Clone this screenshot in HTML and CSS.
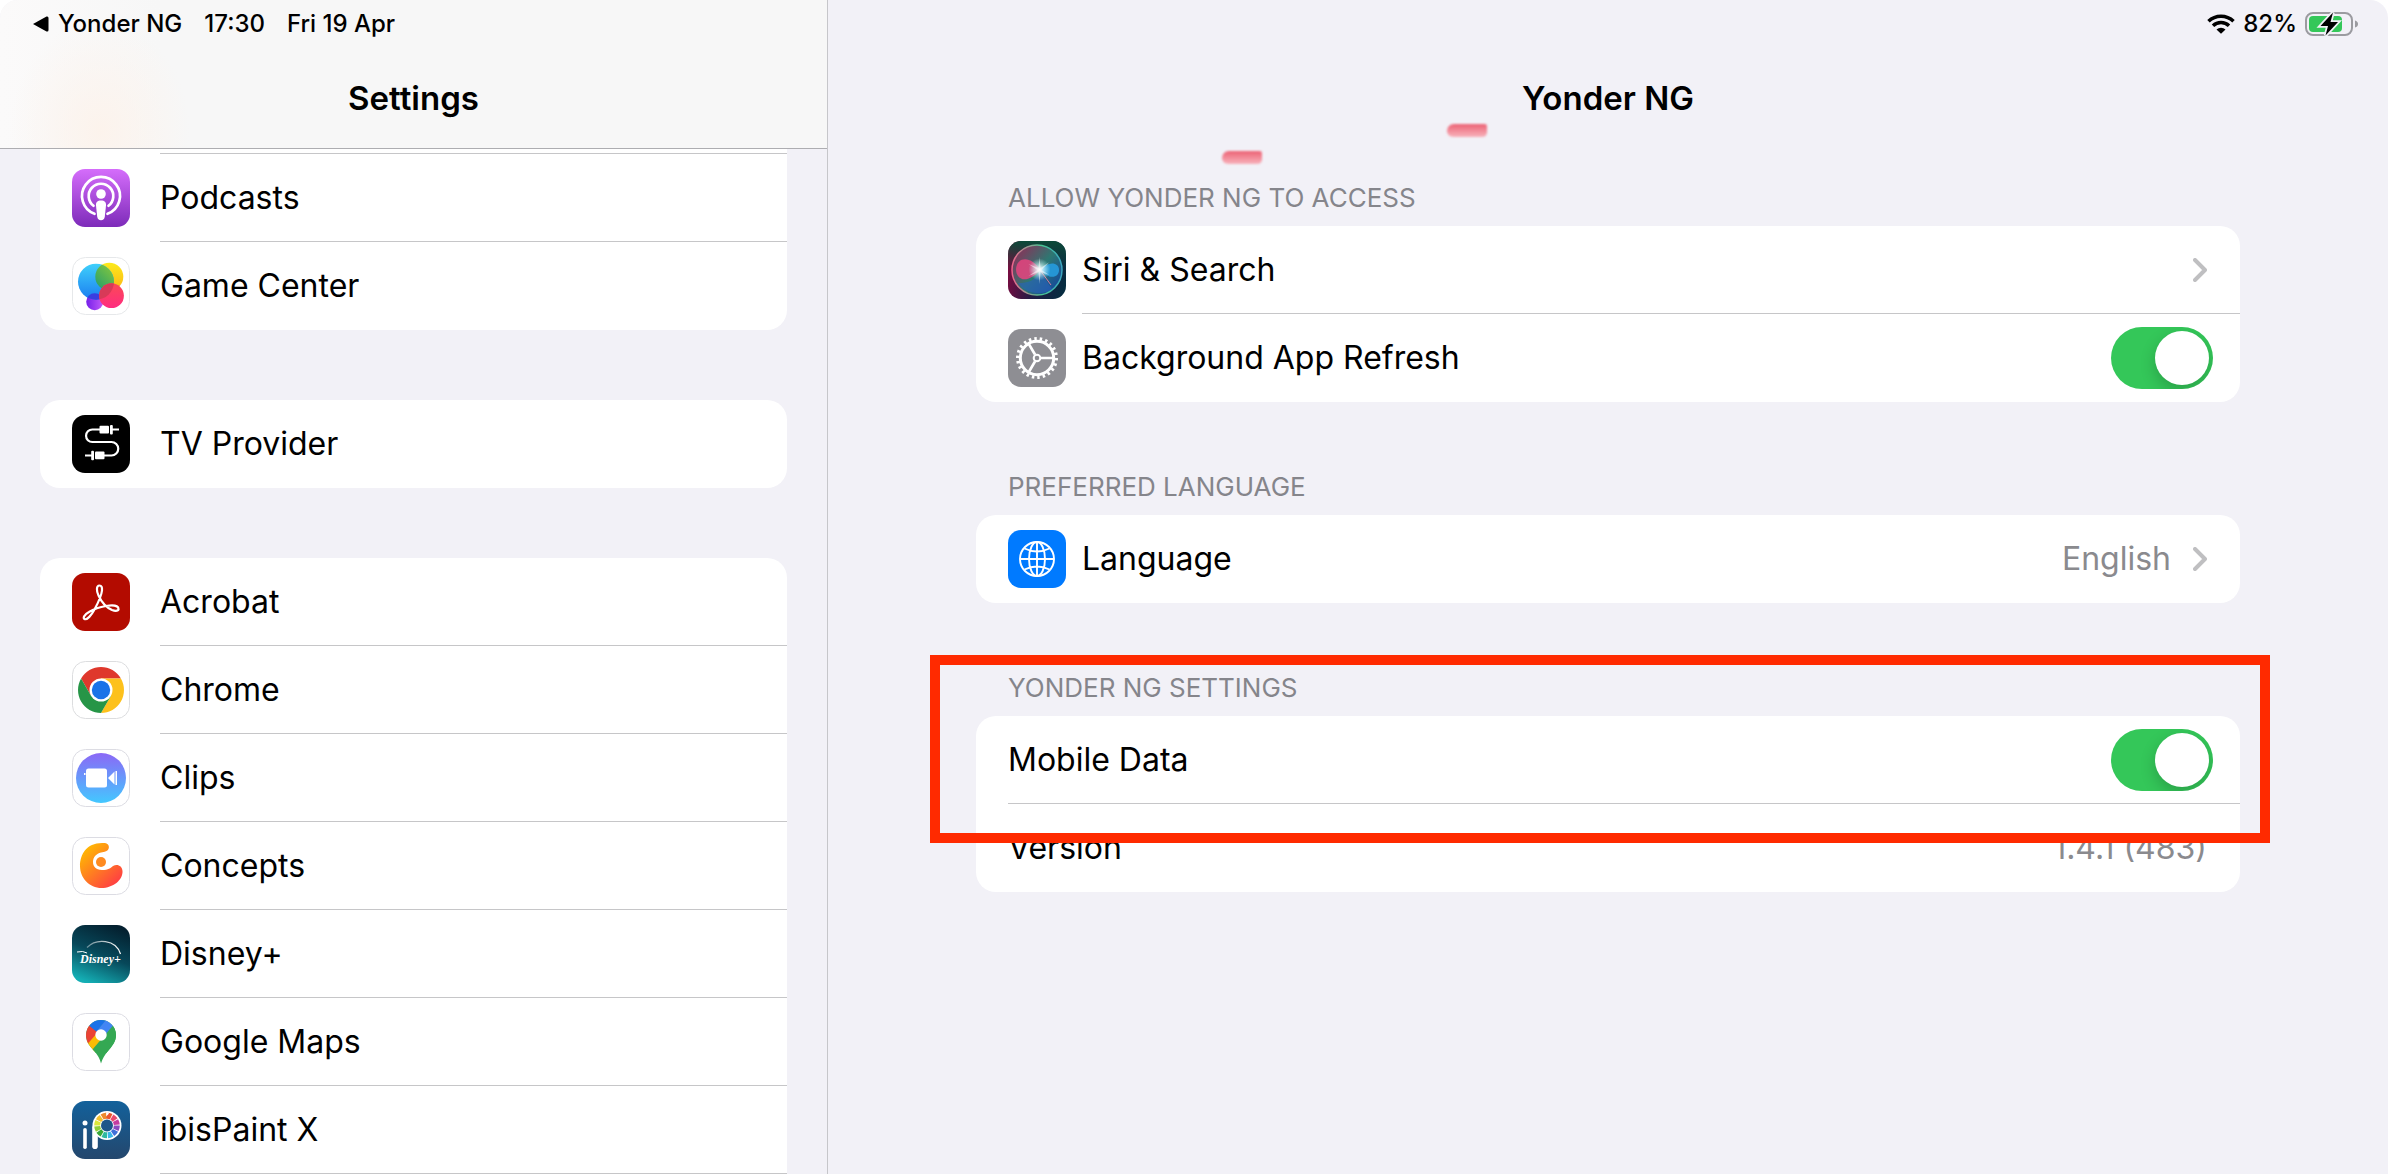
FILE: index.html
```html
<!DOCTYPE html>
<html lang="en">
<head>
  <meta charset="UTF-8" />
  <meta name="viewport" content="width=device-width, initial-scale=1" />
  <title>Settings</title>
  <link rel="stylesheet" href="styles.css">
</head>
<body>
  <div class="screen">
    <aside class="sidebar">
      <header class="bar sidebar-bar">
        <div class="status">
          <a class="back" href="#">
            <svg width="16" height="16" viewBox="0 0 16 16"><path d="M0 8 L13.500 .6 Q15.500 0 15.500 2 V14 Q15.500 16 13.500 15.400 Z"/></svg>
            Yonder NG
          </a>
          <span>17:30</span>
          <span>Fri 19 Apr</span>
        </div>
        <h1 class="title">Settings</h1>
      </header>

      <nav class="sidebar-list">
        <ul class="card card-cut-top">
          <li class="row row-cut"><span class="icon"></span><span class="body"></span></li>
          <li><a class="row" href="#">
            <svg class="icon" viewBox="0 0 58 58">
              <defs><linearGradient id="pod" x1="0" y1="0" x2="0" y2="1"><stop offset="0" stop-color="#d56dfb"/><stop offset="1" stop-color="#7d2bb9"/></linearGradient></defs>
              <rect width="58" height="58" rx="13" fill="url(#pod)"/>
              <g fill="none" stroke="#fff" stroke-width="2.700" stroke-linecap="round">
                <path d="M22.500 44.800A19 19 0 1 1 35.500 44.800"/>
                <path d="M21.500 36.800A12.300 12.300 0 1 1 36.500 36.800"/>
              </g>
              <circle cx="29" cy="25" r="4.800" fill="#fff"/>
              <path d="M29 31.500c3.500 0 5.300 1.500 5 5l-1.200 11c-.3 2.500-1.600 3.700-3.800 3.700s-3.500-1.200-3.800-3.700l-1.200-11c-.3-3.500 1.500-5 5-5z" fill="#fff"/>
            </svg>
            <span class="body">Podcasts</span>
          </a></li>
          <li><a class="row" href="#">
            <svg class="icon" viewBox="0 0 58 58">
              <defs>
                <linearGradient id="gcb" x1="0" y1="0" x2="0" y2="1"><stop offset="0" stop-color="#3fd0fb"/><stop offset="1" stop-color="#1b7df0"/></linearGradient>
                <linearGradient id="gcg" x1="1" y1="0" x2="0" y2="1"><stop offset="0" stop-color="#a6d62c"/><stop offset="1" stop-color="#1f9b6e"/></linearGradient>
                <linearGradient id="gcy" x1="0" y1="0" x2="0" y2="1"><stop offset="0" stop-color="#fbea1c"/><stop offset="1" stop-color="#fdb515"/></linearGradient>
                <linearGradient id="gcr" x1="0" y1="0" x2="0" y2="1"><stop offset="0" stop-color="#fb4a55"/><stop offset="1" stop-color="#ff2c80"/></linearGradient>
                <linearGradient id="gcp" x1="0" y1="0" x2="1" y2="0"><stop offset="0" stop-color="#7620ea"/><stop offset="1" stop-color="#c05af8"/></linearGradient>
                <clipPath id="gcclip"><circle cx="24" cy="24.700" r="18"/></clipPath>
              </defs>
              <rect x=".5" y=".5" width="57" height="57" rx="13" fill="#fff" stroke="#e6e8ea"/>
              <circle cx="22.700" cy="44.700" r="8.500" fill="url(#gcp)"/>
              <circle cx="37.300" cy="19.700" r="14" fill="url(#gcy)"/>
              <circle cx="24" cy="24.700" r="18" fill="url(#gcb)"/>
              <g clip-path="url(#gcclip)">
                <circle cx="37.300" cy="19.700" r="14" fill="url(#gcg)"/>
                <circle cx="22.700" cy="44.700" r="8.500" fill="#3a3de0"/>
              </g>
              <circle cx="39.500" cy="38.700" r="12.400" fill="url(#gcr)"/>
              <g clip-path="url(#gcclip)"><circle cx="39.500" cy="38.700" r="12.400" fill="#d83a58"/></g>
            </svg>
            <span class="body">Game Center</span>
          </a></li>
        </ul>

        <ul class="card">
          <li><a class="row" href="#">
            <svg class="icon" viewBox="0 0 58 58">
              <rect width="58" height="58" rx="13"/>
              <g fill="none" stroke="#fff" stroke-width="2.200">
                <path d="M28 14.500H20.300a6.200 6.200 0 0 0 0 12.500H39.500a6.700 6.700 0 0 1 0 13.500H32"/>
                <path d="M40 14.500h7M13 40.500h7"/>
              </g>
              <g fill="#fff">
                <rect x="27.500" y="10.700" width="9.500" height="7.800" rx="1"/><rect x="38" y="10" width="2.800" height="9.400" rx="1"/>
                <rect x="23" y="36.500" width="9.500" height="7.800" rx="1"/><rect x="19.200" y="35.800" width="2.800" height="9.400" rx="1"/>
              </g>
            </svg>
            <span class="body">TV Provider</span>
          </a></li>
        </ul>

        <ul class="card card-cut-bottom">
          <li><a class="row" href="#">
            <svg class="icon" viewBox="0 0 58 58">
              <rect width="58" height="58" rx="13" fill="#b30b00"/>
              <path d="M27.500 12.500C24 12.500 24.500 18.500 26.500 22.500C29 28 33.500 34 40 37C44 38.500 47 37.800 46.500 35.500C46 32.500 40 32 34 33C28 34 22 36 17 39C12.500 41.500 10.500 45 12.500 46C15 47.500 19.500 42 22.500 36.500C26 30 29.500 22 30 17.500C30.200 14 29.500 12.500 27.500 12.500Z" fill="none" stroke="#fff" stroke-width="2.200"/>
            </svg>
            <span class="body">Acrobat</span>
          </a></li>
          <li><a class="row" href="#">
            <svg class="icon" viewBox="0 0 58 58">
              <rect x=".5" y=".5" width="57" height="57" rx="13" fill="#fff" stroke="#dcdddf"/>
              <path d="M9.100 17.500A23 23 0 0 1 48.900 17.500L29 17.500L19 34.750Z" fill="#df382c"/>
              <path d="M48.900 17.500A23 23 0 0 1 29 52L39 34.750L29 17.500Z" fill="#fdc11c"/>
              <path d="M29 52A23 23 0 0 1 9.100 17.500L19 34.750L39 34.750Z" fill="#269547"/>
              <circle cx="29" cy="29" r="11.500" fill="#fff"/>
              <circle cx="29" cy="29" r="9.200" fill="#1a73e8"/>
            </svg>
            <span class="body">Chrome</span>
          </a></li>
          <li><a class="row" href="#">
            <svg class="icon" viewBox="0 0 58 58">
              <defs><linearGradient id="clips" x1="0" y1="0" x2="0" y2="1"><stop offset="0" stop-color="#8b68f6"/><stop offset="1" stop-color="#43c8ff"/></linearGradient></defs>
              <rect x=".5" y=".5" width="57" height="57" rx="13" fill="#fff" stroke="#dcdce3"/>
              <circle cx="29" cy="29" r="25" fill="url(#clips)"/>
              <rect x="14" y="19.500" width="21" height="19" rx="2.500" fill="#fff"/>
              <path d="M36 29L42.500 22.500V35.500ZM43.500 22h1.500v14h-1.500zM12 24h1.500v2h-1.500z" fill="#fff"/>
            </svg>
            <span class="body">Clips</span>
          </a></li>
          <li><a class="row" href="#">
            <svg class="icon" viewBox="0 0 58 58">
              <defs><linearGradient id="conc" x1=".1" y1=".1" x2=".8" y2=".9"><stop offset="0" stop-color="#ffbb00"/><stop offset="1" stop-color="#ff4440"/></linearGradient></defs>
              <rect x=".5" y=".5" width="57" height="57" rx="13" fill="#fff" stroke="#dcdce3"/>
              <path d="M33 6C15 4.500 8 17 8 29C8 41 17.500 51 29.500 51C41 51 51 43 50.500 34C50.300 28.500 45 26.500 41 29C38.500 31 36.500 33 30 33C23.500 33 21 29 21 25C21 20 24.500 16.500 29 15.500C31 15 32 15 34 14.300C38.500 12.500 37.500 6.500 33 6Z" fill="url(#conc)"/>
              <circle cx="29" cy="25" r="5" fill="#ff8a1f"/>
            </svg>
            <span class="body">Concepts</span>
          </a></li>
          <li><a class="row" href="#">
            <svg class="icon" viewBox="0 0 58 58">
              <defs>
                <linearGradient id="dis" x1=".7" y1="0" x2=".3" y2="1"><stop offset="0" stop-color="#04202f"/><stop offset=".5" stop-color="#07485a"/><stop offset="1" stop-color="#14aeb4"/></linearGradient>
                <linearGradient id="disarc"><stop offset="0" stop-color="#fff" stop-opacity=".4"/><stop offset="1" stop-color="#fff"/></linearGradient>
              </defs>
              <rect width="58" height="58" rx="13" fill="url(#dis)"/>
              <path d="M15 22.500C24 13 44 14 48.500 29" fill="none" stroke="url(#disarc)" stroke-width="1.200"/>
              <path d="M5 27q6-1.500 10 1" fill="none" stroke="#fff"/>
              <text class="disney" x="8" y="38">Disney+</text>
            </svg>
            <span class="body">Disney+</span>
          </a></li>
          <li><a class="row" href="#">
            <svg class="icon" viewBox="0 0 58 58">
              <defs><clipPath id="pin"><path d="M29 50.500C27.500 44 24 40 20 35.500C16.500 31.500 14 27.500 14 22A15 15 0 0 1 44 22C44 29 40 33 36 38C32.500 42 30.500 45.500 29 50.500Z"/></clipPath></defs>
              <rect x=".5" y=".5" width="57" height="57" rx="13" fill="#fff" stroke="#dcdce3"/>
              <g clip-path="url(#pin)">
                <rect x="10" y="5" width="40" height="48" fill="#34a853"/>
                <path d="M10 34L25 17L34 26L20 43Z" fill="#fbbc04"/>
                <path d="M10 5L17.500 12.500L26 19L13 34Z" fill="#ea4335"/>
                <path d="M10 5H36L24.500 18.700L17 12.500Z" fill="#1a73e8"/>
                <path d="M36 4.500L46 6L33 26L24.500 18.500Z" fill="#4285f4"/>
                <path d="M41.500 12L50 12V40H22L20 37Z" fill="#34a853"/>
              </g>
              <circle cx="29" cy="22" r="5.700" fill="#fff"/>
            </svg>
            <span class="body">Google Maps</span>
          </a></li>
          <li><a class="row" href="#">
            <svg class="icon" viewBox="0 0 58 58">
              <defs><linearGradient id="ibis" x1="0" y1="0" x2="0" y2="1"><stop offset="0" stop-color="#13619b"/><stop offset="1" stop-color="#24476d"/></linearGradient></defs>
              <rect width="58" height="58" rx="13" fill="url(#ibis)"/>
              <g fill="#fff">
                <circle cx="13" cy="22" r="2.500"/><rect x="11.200" y="27" width="3.600" height="21" rx="1.800"/>
                <rect x="20.200" y="24" width="5.600" height="24" rx="2.800"/><circle cx="35" cy="24.500" r="14.500"/>
              </g>
              <g class="wheel" transform="rotate(-90 35 24.500)">
                <circle cx="35" cy="24.500" r="9.800" pathLength="12" stroke="#e8552d"/>
                <circle cx="35" cy="24.500" r="9.800" pathLength="12" stroke="#ea4a6c" stroke-dashoffset="-1"/>
                <circle cx="35" cy="24.500" r="9.800" pathLength="12" stroke="#c43ba0" stroke-dashoffset="-2"/>
                <circle cx="35" cy="24.500" r="9.800" pathLength="12" stroke="#8a49c0" stroke-dashoffset="-3"/>
                <circle cx="35" cy="24.500" r="9.800" pathLength="12" stroke="#3f6fd8" stroke-dashoffset="-4"/>
                <circle cx="35" cy="24.500" r="9.800" pathLength="12" stroke="#38b6e8" stroke-dashoffset="-5"/>
                <circle cx="35" cy="24.500" r="9.800" pathLength="12" stroke="#2fb9a0" stroke-dashoffset="-6"/>
                <circle cx="35" cy="24.500" r="9.800" pathLength="12" stroke="#38a838" stroke-dashoffset="-7"/>
                <circle cx="35" cy="24.500" r="9.800" pathLength="12" stroke="#8fce35" stroke-dashoffset="-8"/>
                <circle cx="35" cy="24.500" r="9.800" pathLength="12" stroke="#dbe63a" stroke-dashoffset="-9"/>
                <circle cx="35" cy="24.500" r="9.800" pathLength="12" stroke="#f0c030" stroke-dashoffset="-10"/>
                <circle cx="35" cy="24.500" r="9.800" pathLength="12" stroke="#ee8a2c" stroke-dashoffset="-11"/>
              </g>
              <circle cx="35" cy="24.500" r="6" fill="#1d5689"/>
            </svg>
            <span class="body">ibisPaint X</span>
          </a></li>
        </ul>
      </nav>
    </aside>

    <main class="detail">
      <header class="bar">
        <div class="status status-right">
          <svg width="28" height="20" viewBox="0 0 28 20">
            <g fill="none" stroke="#000" stroke-width="3.500"><path d="M1.500 7.200A18 18 0 0 1 26.500 7.200"/><path d="M6 11.800A11.500 11.500 0 0 1 22 11.800"/></g>
            <path d="M14 19.800L9.500 15.500A6.500 6.500 0 0 1 18.500 15.500Z"/>
          </svg>
          <span>82%</span>
          <svg width="54" height="26" viewBox="0 0 54 26">
            <rect x="1" y="2" width="46" height="22" rx="7" fill="none" stroke="#9b9ba0" stroke-width="2"/>
            <path d="M50 9.500q3 1 3 3.500t-3 3.500z" fill="#9b9ba0"/>
            <rect x="4" y="5" width="33" height="16" rx="4" fill="#34c759"/>
            <path d="M28 1.500L15.500 15H23L20.500 24.500L33 11H25.500Z" stroke="#f2f1f7" stroke-width="3.500" paint-order="stroke"/>
          </svg>
        </div>
        <h2 class="title">Yonder NG</h2>
        <span class="mark mark-left"></span>
        <span class="mark mark-right"></span>
      </header>

      <div class="groups">
        <section class="group">
          <h3 class="label">ALLOW YONDER NG TO ACCESS</h3>
          <div class="card">
            <a class="row" href="#">
              <svg class="icon" viewBox="0 0 58 58">
                <defs>
                  <linearGradient id="siri" x1="0" y1=".4" x2="1" y2=".6"><stop offset="0" stop-color="#7d0c40"/><stop offset=".5" stop-color="#221b45"/><stop offset="1" stop-color="#062c40"/></linearGradient>
                  <linearGradient id="siritop" x1="0" y1="0" x2="0" y2="1"><stop offset="0" stop-color="#0b4a38"/><stop offset=".5" stop-color="#0b4a38" stop-opacity="0"/></linearGradient>
                  <linearGradient id="orb" x1=".1" y1=".3" x2=".8" y2=".9"><stop offset="0" stop-color="#76405e"/><stop offset=".5" stop-color="#2d7872"/><stop offset="1" stop-color="#174e96"/></linearGradient>
                  <linearGradient id="orbring"><stop offset="0" stop-color="#f0648c"/><stop offset=".6" stop-color="#48c793"/><stop offset="1" stop-color="#3ba5c0"/></linearGradient>
                  <radialGradient id="glow"><stop offset="0" stop-color="#fff"/><stop offset=".3" stop-color="#e9ffff" stop-opacity=".75"/><stop offset="1" stop-color="#bff" stop-opacity="0"/></radialGradient>
                </defs>
                <rect width="58" height="58" rx="13" fill="url(#siri)"/>
                <rect width="58" height="58" rx="13" fill="url(#siritop)"/>
                <circle cx="29" cy="29" r="25" fill="url(#orb)" stroke="url(#orbring)" stroke-width="1.500"/>
                <path d="M32 29C24 15 9 15 8 28C8 40 20 43 32 29Z" fill="#e6447f" opacity=".85"/>
                <path d="M32 29C40 20 51 21 51 29C51 37 41 39 32 29Z" fill="#269bde" opacity=".9"/>
                <path d="M32 29C28 40 20 42 10 42C17 53 36 55 44 48C40 43 37 37 32 29Z" fill="#2861bd" opacity=".6"/>
                <path d="M32 29L43 44" stroke="#d67b9f"/>
                <circle cx="31.500" cy="28.500" r="11" fill="url(#glow)"/>
                <path d="M31.500 16l1 11 9-6-8 8 8 5-9-3-1 12-1-12-10 4 9-6-9-6 10 4z" fill="#fff" opacity=".5"/>
              </svg>
              <span class="body">Siri &amp; Search
                <svg class="chevron" viewBox="0 0 14 24"><path d="M2 2L12 12L2 22"/></svg>
              </span>
            </a>
            <label class="row">
              <svg class="icon" viewBox="0 0 58 58">
                <rect width="58" height="58" rx="13" fill="#8e8e93"/>
                <g fill="none" stroke="#fff">
                  <circle cx="29" cy="29" r="16.700" stroke-width="3"/>
                  <circle cx="29" cy="29" r="19.300" stroke-width="3.400" pathLength="44" stroke-dasharray=".9 1.100"/>
                  <circle cx="29" cy="29" r="3.300" stroke-width="2"/>
                  <path d="M33 29H45.500M27 25.500L20.500 14.500M27 32.500L20.500 43.500" stroke-width="2.600"/>
                </g>
              </svg>
              <span class="body">Background App Refresh
                <input class="switch" type="checkbox" checked>
              </span>
            </label>
          </div>
        </section>

        <section class="group">
          <h3 class="label">PREFERRED LANGUAGE</h3>
          <div class="card">
            <a class="row" href="#">
              <svg class="icon" viewBox="0 0 58 58">
                <rect width="58" height="58" rx="13" fill="#007aff"/>
                <g fill="none" stroke="#fff" stroke-width="1.900">
                  <circle cx="29" cy="29" r="17"/>
                  <ellipse cx="29" cy="29" rx="8" ry="17"/>
                  <path d="M29 12V46M12 29H46M16.500 18.500Q29 24.500 41.500 18.500M16.500 39.500Q29 33.500 41.500 39.500"/>
                </g>
              </svg>
              <span class="body">Language
                <span class="value">English</span>
                <svg class="chevron" viewBox="0 0 14 24"><path d="M2 2L12 12L2 22"/></svg>
              </span>
            </a>
          </div>
        </section>

        <section class="group highlighted">
          <h3 class="label">YONDER NG SETTINGS</h3>
          <div class="card">
            <label class="row">
              <span class="body">Mobile Data
                <input class="switch" type="checkbox" checked>
              </span>
            </label>
            <div class="row">
              <span class="body">Version
                <span class="value value-end">1.4.1 (483)</span>
              </span>
            </div>
          </div>
        </section>
      </div>
    </main>
  </div>
</body>
</html>
```

FILE: styles.css
```css
*,
*::before,
*::after {
  box-sizing: border-box;
}

body {
  margin: 0;
  background: white;
  color: black;
  font-family: Inter, "Liberation Sans", sans-serif;
  font-size: 32px;
  line-height: 40px;
  overflow: hidden;
}

a {
  color: inherit;
  text-decoration: none;
}

.screen {
  display: flex;
  height: 100vh;
  background: #f2f1f7;
  border-radius: 18px 18px 0 0;
  overflow: hidden;
}

.sidebar {
  flex: 0 0 828px;
  border-right: 1px solid #c6c6ca;
  overflow: hidden;
}

.detail {
  flex: 1;
  min-width: 0;
}

/* top bars */
.bar {
  position: relative;
  height: 149px;
}

.sidebar-bar {
  border-bottom: 1px solid #adadb1;
  background: radial-gradient(ellipse 90px 110px at 100px 130px, #fcf3ec, rgba(252, 243, 236, 0)), linear-gradient(to right, #fbfafa, #f7f7f7 160px);
}

.status {
  display: flex;
  align-items: center;
  gap: 22px;
  height: 48px;
  padding: 0 33px;
  font-size: 24px;
  font-weight: 500;
}

.back {
  display: flex;
  align-items: center;
  gap: 9px;
}

.status-right {
  justify-content: flex-end;
  gap: 8px;
  padding-right: 29px;
}

.title {
  margin: 0;
  font-size: 33px;
  font-weight: 600;
  line-height: 100px;
  text-align: center;
}

.mark {
  position: absolute;
  width: 40px;
  height: 13px;
  border-radius: 9px 3px 6px 8px;
  background: linear-gradient(#ec6274, #f8b3bc);
  filter: blur(1px);
}

.mark-left {
  top: 151px;
  left: calc(50% - 386px);
}

.mark-right {
  top: 124px;
  left: calc(50% - 161px);
}

/* cards and rows */
.sidebar-list {
  display: flex;
  flex-direction: column;
  gap: 70px;
  padding: 0 40px;
}

.card {
  margin: 0;
  padding: 0;
  list-style: none;
  background: white;
  border-radius: 20px;
}

.card-cut-top {
  border-radius: 0 0 20px 20px;
}

.card-cut-bottom {
  border-radius: 20px 20px 0 0;
}

.row {
  display: flex;
  align-items: center;
  gap: 30px;
  height: 88px;
  padding-left: 32px;
}

.row-cut,
.row-cut .icon {
  height: 5px;
}

.icon {
  flex: none;
  width: 58px;
  height: 58px;
}

.body {
  display: flex;
  flex: 1;
  align-items: center;
  align-self: stretch;
  border-bottom: 1px solid #c6c6c8;
}

.card > .row:last-child .body,
.card:not(.card-cut-bottom) > li:last-child .body {
  border-bottom-color: transparent;
}

.disney {
  fill: white;
  font-family: "Liberation Serif", serif;
  font-size: 12px;
  font-style: italic;
  font-weight: bold;
}

.wheel circle {
  fill: none;
  stroke-width: 6;
  stroke-dasharray: .85 11.15;
}

/* detail pane */
.groups {
  max-width: 1328px;
  margin: 0 auto;
  padding: 29px 32px;
}

.group {
  position: relative;
  margin-bottom: 65px;
}

.label {
  margin: 0;
  padding: 0 32px 8px;
  color: #85858b;
  font-size: 26px;
  font-weight: 400;
  line-height: 40px;
}

.detail .row {
  gap: 16px;
}

.detail .body {
  padding-right: 27px;
}

.value {
  margin-left: auto;
  color: #8a8a8e;
}

.value-end {
  padding-right: 6px;
}

.chevron {
  width: 14px;
  height: 24px;
  margin: 0 6px 0 auto;
  fill: none;
  stroke: #bfbfc1;
  stroke-width: 4;
  stroke-linecap: round;
  stroke-linejoin: round;
}

.value + .chevron {
  margin-left: 22px;
}

.switch {
  appearance: none;
  width: 102px;
  height: 62px;
  margin: 0 0 0 auto;
  padding: 4px;
  border-radius: 31px;
  background: #e9e9eb;
  overflow: hidden;
}

.switch::before {
  content: "";
  display: block;
  width: 54px;
  height: 54px;
  border-radius: 50%;
  background: white;
  box-shadow: 0 6px 16px rgba(0, 0, 0, .2);
}

.switch:checked {
  background: #34c759;
}

.switch:checked::before {
  margin-left: auto;
}

/* red callout round the settings group */
.highlighted::after {
  content: "";
  position: absolute;
  top: -13px;
  right: -30px;
  left: -46px;
  height: 188px;
  border: 10px solid #ff2a00;
  pointer-events: none;
}
```
